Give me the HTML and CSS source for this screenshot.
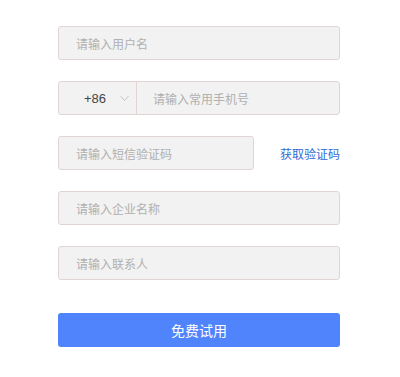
FILE: index.html
```html
<!DOCTYPE html>
<html lang="zh-CN">
<head>
  <meta charset="UTF-8" />
  <meta name="viewport" content="width=device-width, initial-scale=1" />
  <title>免费试用</title>
  <link rel="stylesheet" href="styles.css">
</head>
<body>
  <form class="trial-form" id="trialForm">
    <div class="field">
      <input type="text" class="text-input" placeholder="请输入用户名" />
    </div>

    <div class="field phone-field">
      <div class="area-code">
        <span>+86</span>
        <svg class="chevron" width="9" height="7" viewBox="0 0 9 7">
          <path d="M0.5 1 L4.5 5.5 L8.5 1" fill="none" stroke="#c4c4c4" stroke-width="1" />
        </svg>
      </div>
      <input type="tel" class="phone-input" placeholder="请输入常用手机号" />
    </div>

    <div class="field sms-field">
      <input type="text" class="text-input sms-input" placeholder="请输入短信验证码" />
      <a href="#" class="sms-link">获取验证码</a>
    </div>

    <div class="field">
      <input type="text" class="text-input" placeholder="请输入企业名称" />
    </div>

    <div class="field">
      <input type="text" class="text-input" placeholder="请输入联系人" />
    </div>

    <button type="submit" class="submit-btn">免费试用</button>
  </form>
</body>
</html>
```

FILE: styles.css
```css
:root {
  --input-bg: #f2f2f2;
  --border-color: #e3d4d4;
  --placeholder: #b0b0b0;
  --text: #555555;
  --link: #2f6bd6;
  --accent: #4f84fc;
}
body {
  margin: 0;
  background: #fff;
  font-family: "Microsoft YaHei", "Noto Sans CJK SC", "Liberation Sans", sans-serif;
}
.trial-form {
  width: 282px;
  padding: 26px 0 0 58px;
}
.field {
  height: 34px;
  margin-bottom: 21px;
  display: flex;
  align-items: center;
}
.text-input,
.phone-field {
  height: 34px;
  box-sizing: border-box;
  border: 1px solid var(--border-color);
  border-radius: 3px;
  background: var(--input-bg);
}
.text-input {
  width: 100%;
  padding: 0 17px;
  font-family: inherit;
  font-size: 12px;
  color: var(--text);
  outline: none;
}
.text-input::placeholder,
.phone-input::placeholder {
  color: var(--placeholder);
}
.phone-field {
  width: 100%;
}
.area-code {
  width: 78px;
  height: 100%;
  box-sizing: border-box;
  border-right: 1px solid var(--border-color);
  display: flex;
  align-items: center;
  padding-left: 25px;
  font-family: "Liberation Sans", Arial, sans-serif;
  font-size: 13px;
  color: #444;
}
.chevron {
  margin-left: 14px;
}
.phone-input {
  flex: 1;
  height: 100%;
  border: none;
  background: transparent;
  padding: 0 16px;
  font-family: inherit;
  font-size: 12px;
  color: var(--text);
  outline: none;
}
.sms-input {
  width: 196px;
  flex: none;
}
.sms-link {
  margin-left: 26px;
  color: var(--link);
  font-size: 12px;
  text-decoration: none;
}
.submit-btn {
  display: block;
  width: 282px;
  height: 34px;
  margin-top: 33px;
  border: none;
  border-radius: 3px;
  background: var(--accent);
  color: #fff;
  font-family: inherit;
  font-size: 14px;
  cursor: pointer;
}
```
